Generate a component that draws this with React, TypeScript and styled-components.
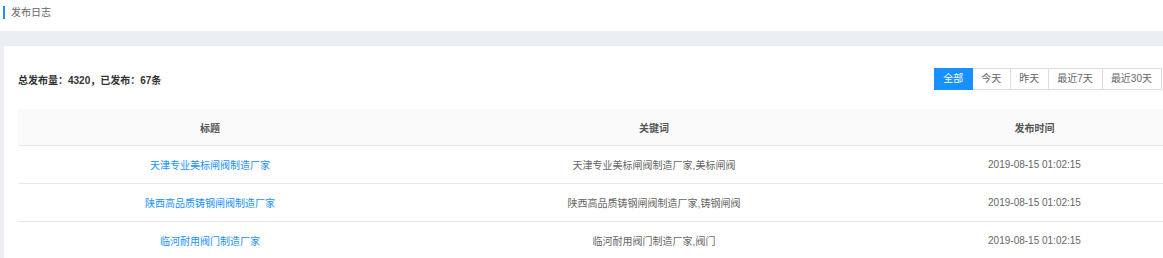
import React, {useState} from 'react';
import styled, {createGlobalStyle} from 'styled-components';

const GlobalStyle = createGlobalStyle`
  html, body {
    margin: 0;
    padding: 0;
    background: #ffffff;
    font-family: "Liberation Sans", Arial, "Noto Sans CJK SC", sans-serif;
    overflow: hidden;
  }
`;

const Page = styled.div`
  width: 1163px;
  background: #ebeef2;
`;

const TopBar = styled.div`
  height: 31px;
  background: #ffffff;
  display: flex;
  align-items: flex-start;
  padding: 6px 0 0 3px;
  box-sizing: border-box;
`;

const TopTitle = styled.div`
  border-left: 2px solid #1890ff;
  height: 13px;
  line-height: 14px;
  padding-left: 6px;
  font-size: 10px;
  color: #666666;
`;

const Card = styled.div`
  margin: 15px 0 0 4px;
  background: #ffffff;
  padding: 22px 1px 0 14px;
  min-height: 212px;
  box-sizing: border-box;
`;

const Toolbar = styled.div`
  display: flex;
  align-items: center;
  justify-content: space-between;
  height: 22px;
`;

const Summary = styled.div`
  font-size: 10px;
  font-weight: bold;
  color: #333333;
`;

const ButtonGroup = styled.div`
  display: flex;
`;

const RangeButton = styled.button<{active: boolean}>`
  height: 22px;
  padding: 0 9px 0 8px;
  margin-left: -1px;
  font-family: inherit;
  font-size: 10px;
  line-height: 20px;
  border: 1px solid ${(props) => (props.active ? '#1890ff' : '#dddddd')};
  background: ${(props) => (props.active ? '#1890ff' : '#ffffff')};
  color: ${(props) => (props.active ? '#ffffff' : '#666666')};
  cursor: pointer;
  position: relative;
  z-index: ${(props) => (props.active ? 1 : 0)};
`;

const Table = styled.table`
  margin-top: 19px;
  width: 100%;
  border-collapse: collapse;
  table-layout: fixed;
`;

const HeadCell = styled.th<{width: number}>`
  width: ${(props) => props.width}px;
  height: 36px;
  background: #fafafa;
  border-bottom: 1px solid #e8e8e8;
  font-size: 10px;
  font-weight: bold;
  color: #555555;
  text-align: center;
  padding: 0;
`;

const Cell = styled.td`
  height: 37px;
  border-bottom: 1px solid #e8e8e8;
  font-size: 10px;
  color: #666666;
  text-align: center;
  padding: 0;
`;

const TitleLink = styled.a`
  color: #1890ff;
  text-decoration: none;
`;

interface LogRow {
  title: string;
  keywords: string;
  time: string;
}

const ranges = ['全部', '今天', '昨天', '最近7天', '最近30天'];

const rows: LogRow[] = [
  {title: '天津专业美标闸阀制造厂家', keywords: '天津专业美标闸阀制造厂家,美标闸阀', time: '2019-08-15 01:02:15'},
  {title: '陕西高品质铸钢闸阀制造厂家', keywords: '陕西高品质铸钢闸阀制造厂家,铸钢闸阀', time: '2019-08-15 01:02:15'},
  {title: '临河耐用阀门制造厂家', keywords: '临河耐用阀门制造厂家,阀门', time: '2019-08-15 01:02:15'},
];

const App = (): JSX.Element => {
  const [range, setRange] = useState('全部');

  return (
    <Page>
      <GlobalStyle />
      <TopBar>
        <TopTitle>发布日志</TopTitle>
      </TopBar>
      <Card>
        <Toolbar>
          <Summary>总发布量：4320，已发布：67条</Summary>
          <ButtonGroup>
            {ranges.map((r) => (
              <RangeButton key={r} active={r === range} onClick={() => setRange(r)}>
                {r}
              </RangeButton>
            ))}
          </ButtonGroup>
        </Toolbar>
        <Table>
          <thead>
            <tr>
              <HeadCell width={384}>标题</HeadCell>
              <HeadCell width={504}>关键词</HeadCell>
              <HeadCell width={257}>发布时间</HeadCell>
            </tr>
          </thead>
          <tbody>
            {rows.map((row, i) => (
              <tr key={i}>
                <Cell>
                  <TitleLink href="#">{row.title}</TitleLink>
                </Cell>
                <Cell>{row.keywords}</Cell>
                <Cell>{row.time}</Cell>
              </tr>
            ))}
          </tbody>
        </Table>
      </Card>
    </Page>
  );
};

export default App;
